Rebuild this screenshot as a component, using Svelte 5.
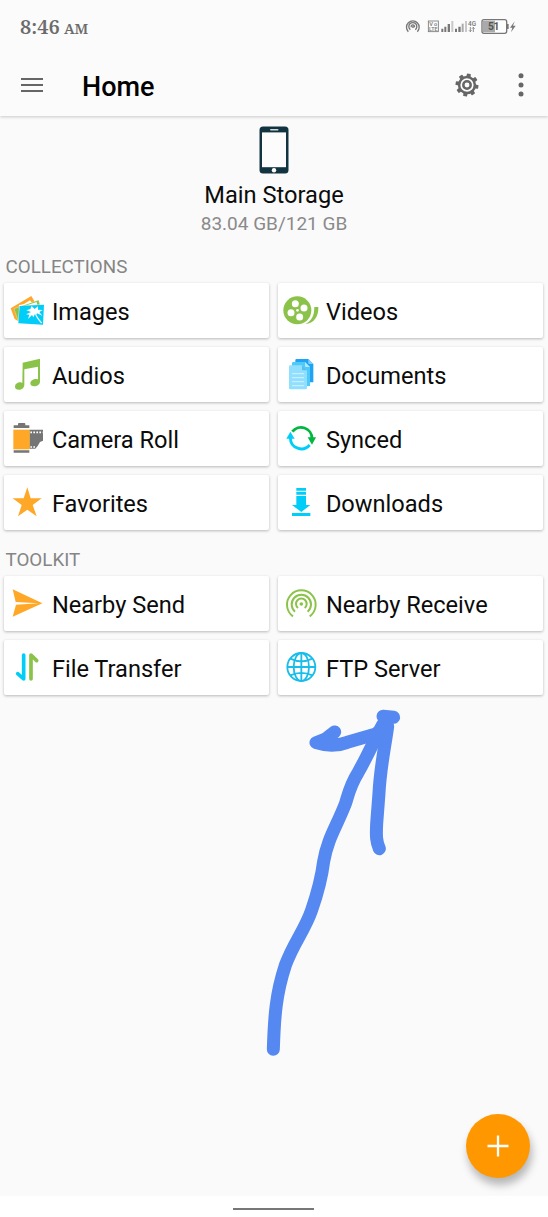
<script>
  const groups = [
    {
      title: 'Collections',
      items: [
        { label: 'Images', icon: 'images', box: '15 99 132 165' },
        { label: 'Videos', icon: 'videos', box: '27 39 132 165' },
        { label: 'Audios', icon: 'audios', box: '15 291 132 165' },
        { label: 'Documents', icon: 'documents', box: '27 231 132 165' },
        { label: 'Camera Roll', icon: 'camera', box: '15 33 132 165' },
        { label: 'Synced', icon: 'synced', box: '27 33 132 165' },
        { label: 'Favorites', icon: 'favorites', box: '15 225 132 165' },
        { label: 'Downloads', icon: 'downloads', box: '27 225 132 165' }
      ]
    },
    {
      title: 'Toolkit',
      items: [
        { label: 'Nearby Send', icon: 'send', box: '15 108 132 165' },
        { label: 'Nearby Receive', icon: 'receive', box: '57 48 132 165' },
        { label: 'File Transfer', icon: 'transfer', box: '15 300 132 165' },
        { label: 'FTP Server', icon: 'ftp', box: '57 240 132 165' }
      ]
    }
  ];
  const teeth = [0, 45, 90, 135, 180, 225, 270, 315];
</script>

<div class="screen">
  <header>
    <div class="status">
      <div class="time">8:46 <small>AM</small></div>
      <svg class="indicators" width="158" height="40" viewBox="0 0 474 120">
        <g fill="none" stroke="#777" stroke-width="4">
          <path d="M55 95A19 19 0 1 1 82 95M61 89A12 12 0 1 1 76 89" />
          <path d="M64 82A5 5 0 1 1 73 82" />
          <rect x="115" y="63" width="30" height="32" stroke-width="2.5" />
        </g>
        <circle cx="69" cy="81" r="3" fill="#777" />
        <g fill="#777" font-family="Roboto, sans-serif" font-weight="500">
          <text x="118" y="78" font-size="17" textLength="24">Vo</text>
          <text x="117" y="94" font-size="17" textLength="26" lengthAdjust="spacingAndGlyphs">LTE</text>
          <text x="234" y="79" font-size="20" textLength="24" lengthAdjust="spacingAndGlyphs">4G</text>
        </g>
        <path fill="none" stroke="#777" stroke-width="2.5" d="M241 81v14M237 91l4 4 4-4M250 96V82M246 86l4-4 4 4" />
        <path fill="#777" d="M154 86h6v10h-6zM163 80h6v16h-6zM173 72h7v24h-7zM195 86h6v10h-6zM205 80h7v16h-7z" />
        <path fill="#c8c8c8" d="M184 63h6v33h-6zM225 63h6v33h-6z" />
        <path fill="#aaa" d="M215 71h6v25h-6z" />
        <rect x="276" y="59" width="74" height="41" rx="6" fill="#fff" stroke="#777" stroke-width="4" />
        <path fill="#aaa" d="M279 62h36v35h-36z" />
        <path fill="#777" d="M351 72h5v15h-5zM374 64L360 83h7l-4 14 14-20h-8z" />
        <text x="294" y="91" font-family="Roboto, sans-serif" font-size="31" font-weight="700" fill="#555" textLength="34">51</text>
      </svg>
    </div>
    <div class="bar">
      <svg class="menu" width="22" height="16" viewBox="0 0 22 16">
        <path d="M0 1.9h22M0 8h22M0 14h22" stroke="#666" stroke-width="2" />
      </svg>
      <h1>Home</h1>
      <svg class="gear" width="24" height="24" viewBox="-12 -12 24 24">
        <g fill="#666">
          {#each teeth as angle}
            <rect x="-2" y="-11.500" width="4" height="4.500" rx=".8" transform="rotate({angle + 10})" />
          {/each}
        </g>
        <circle r="7.900" fill="none" stroke="#666" stroke-width="2.500" />
        <circle r="3.700" fill="none" stroke="#666" stroke-width="2.500" />
      </svg>
      <svg class="more" width="6" height="24" viewBox="0 0 6 24" fill="#666">
        <circle cx="3" cy="2.700" r="2.500" /><circle cx="3" cy="12" r="2.500" /><circle cx="3" cy="21" r="2.500" />
      </svg>
    </div>
  </header>

  <main>
    <section class="storage">
      <svg width="30" height="48" viewBox="0 0 30 48">
        <rect x=".5" y=".5" width="29" height="47" rx="3.500" fill="#123440" />
        <path fill="#fcfcfc" d="M3 6.400h24v34.800H3z" />
        <rect x="11" y="3" width="8.500" height="1.600" rx=".8" fill="#cfd8dc" />
        <circle cx="15" cy="44.200" r="2.200" fill="#fff" />
      </svg>
      <div class="name">Main Storage</div>
      <div class="size">83.04 GB/121 GB</div>
    </section>

    {#each groups as group}
      <h2>{group.title}</h2>
      <div class="grid">
        {#each group.items as item}
          <div class="tile">
            <svg width="44" height="55" viewBox={item.box}>
              {#if item.icon === 'images'}
                <path fill="#ffa726" d="M35 175L97 138L108 157L60 165L57 213L47 207z" />
                <path fill="#fff" d="M65 168L93 151L100 160L66 173z" />
                <path fill="#8bc34a" stroke="#fff" stroke-width="1" d="M45 176L119 150L123 164L61 169L58 215z" />
                <path fill="#fff" d="M78 167L113 156L115 164z" />
                <path fill="#00cdf8" d="M62 168L135 164L132 224L58 220z" />
                <path fill="#fff" d="M82 181L94 177L98 168L107 177L117 169L117 179L131 180L121 186L130 197L114 190L112 194C117 203 123 211 130 219L126 220C117 209 111 201 108 192L103 202L99 195L87 207L91 194L81 193L96 186z" />
              {:else if item.icon === 'videos'}
                <circle cx="85" cy="121" r="42" fill="#8bc34a" />
                <g fill="#fff">
                  <circle cx="79" cy="101" r="10.5" /><circle cx="105" cy="114" r="10.5" />
                  <circle cx="92" cy="141" r="10.5" /><circle cx="66" cy="128" r="10.5" /><circle cx="85.500" cy="121" r="4" />
                </g>
                <path fill="#8bc34a" d="M136 111H148C149 139 135 161 109 162C128 153 136 137 136 111z" />
              {:else if item.icon === 'audios'}
                <path fill="#8bc34a" d="M71 338L123 326V394C123 404 115 409 106 409C98 409 94 405 94 400C94 392 103 387 111 387Q115 387 117 388V350L76 358V404C76 413 68 419 60 419C52 419 48 415 48 410C48 402 56 397 64 397Q68 397 70 399z" />
              {:else if item.icon === 'documents'}
                <path fill="#1fa3f5" d="M82 267H118L133 282V337H82q-3 0-3-3V270q0-3 4-3z" />
                <path fill="#80cfff" d="M118 267L133 282H121q-3 0-3-3z" />
                <path fill="#4fc8fa" d="M73 276H108L123 291V348H73q-4 0-4-4V280q0-4 4-4z" />
                <path fill="#b3e9ff" d="M108 276L123 291H111q-3 0-3-3z" />
                <path fill="#90dfff" d="M64 286H99L114 301V354q0 4-4 4H64q-4 0-4-4V290q0-4 4-4z" />
                <path fill="#52bef2" d="M99 286L114 301H102q-3 0-3-3z" />
                <path stroke="#d0f3ff" stroke-width="3" d="M69 311h36M69 323h36M69 335h36M69 347h36" />
              {:else if item.icon === 'camera'}
                <path fill="#757575" d="M57 72q0-3 3-3h16q3 0 3 3v4h12v8H44v-8h13zM44 151h47v7H44zM91 89h41v33l-9 4-7 12-7 8H91z" />
                <path fill="#ffa726" d="M43 89h49v59H43z" />
                <path stroke="#fff" stroke-width="5" stroke-dasharray="5 4" d="M94 97h37M94 141h17" />
              {:else if item.icon === 'synced'}
                <g fill="none" stroke-width="8.500">
                  <path stroke="#00b83f" d="M70 95A33 33 0 0 1 129 115" />
                  <path stroke="#00cdf8" d="M122 135A33 33 0 0 1 64 114" />
                </g>
                <path fill="#00b83f" d="M116 112h25l-12 22z" />
                <path fill="#00cdf8" d="M52 116L64 95L77 116z" />
              {:else if item.icon === 'favorites'}
                <path fill="#ffa726" d="M85 262L95 295H128L101 315L113 349L85 329L57 349L68 315L41 295H74z" />
              {:else if item.icon === 'downloads'}
                <path fill="#00cdf8" d="M82 264h29v8H82zM82 275h29v9H82zM82 288h29v27h13L97 336L69 315h13zM69 339h55v9H69z" />
              {:else if item.icon === 'send'}
                <path fill="#ffa726" d="M41 148L130 190L41 230L51 194L119 190L50 186z" />
              {:else if item.icon === 'receive'}
                <g fill="none" stroke="#8bc34a" stroke-width="6">
                  <path d="M102 169A43 43 0 1 1 152 169" />
                  <path d="M108 155A29 29 0 1 1 146 155" />
                  <path d="M117 144A16 16 0 1 1 137 144" />
                </g>
                <circle cx="127" cy="132" r="5.500" fill="#8bc34a" />
              {:else if item.icon === 'transfer'}
                <g fill="none" stroke-width="11" stroke-linejoin="round" stroke-linecap="round">
                  <path stroke="#00cdf8" d="M74 345V417L56 401" />
                  <path stroke="#8bc34a" d="M96 417V345L113 362" />
                </g>
              {:else}
                <g fill="none" stroke="#18bdea" stroke-width="5.500">
                  <circle cx="127" cy="321" r="42" />
                  <ellipse cx="127" cy="321" rx="23" ry="42" />
                  <path d="M127 279V363M85 321H169M94 296Q127 312 160 296M94 346Q127 331 160 346" />
                </g>
              {/if}
            </svg>
            <span>{item.label}</span>
          </div>
        {/each}
      </div>
    {/each}
  </main>

  <svg class="drawing" width="150" height="370" viewBox="0 0 450 1110" fill="none" stroke="#5588f0" stroke-width="39" stroke-linecap="round" stroke-linejoin="round">
    <path d="M40 1048C43 950 48 880 76 796C101 727 135 690 155 630C174 575 184 540 191 484C204 412 229 382 257 309C265 282 271 254 294 218C324 165 341 123 367 76L381 60" />
    <path d="M224 96L198 116L168 128C202 139 234 138 262 127L345 103L383 79C375 140 361 200 357 279L350 371C348 410 349 425 358 446" />
    <path d="M369 49L401 52" />
  </svg>

  <button class="fab" aria-label="Add">
    <svg width="22" height="22" viewBox="0 0 22 22"><path d="M11 .5v21M.5 11h21" stroke="#fff" stroke-width="2.300" /></svg>
  </button>
  <footer><i></i></footer>
</div>

<style>
  :global(body) { margin: 0; background: #fafafa; }
  .screen {
    position: relative;
    box-sizing: border-box;
    width: 548px;
    height: 1217px;
    display: flex;
    flex-direction: column;
    background: #fafafa;
    color: #0b0b0b;
    font-family: Roboto, sans-serif;
    overflow: hidden;
  }
  svg { display: block; flex: none; }
  header { height: 116px; background: #fbfbfb; box-shadow: 0 1px 3px rgba(0, 0, 0, .2); }
  .status { height: 54px; display: flex; justify-content: space-between; }
  .time { padding: 14px 0 0 20px; font: 600 20px/26px "Noto Serif", "Liberation Serif", serif; color: #6b6b6b; white-space: nowrap; }
  .time small { font-size: 14.500px; margin-left: -1px; }
  .bar { height: 62px; display: flex; align-items: center; padding: 0 24.500px 0 21px; box-sizing: border-box; }
  h1 { margin: 3px auto 0 39px; font-size: 27px; font-weight: 500; line-height: 32px; color: #000; }
  .gear { margin-right: 39px; }
  .storage { display: flex; flex-direction: column; align-items: center; padding-top: 10px; height: 129px; box-sizing: border-box; }
  .name { margin-top: 7px; font-size: 23.650px; line-height: 28px; }
  .size { margin-top: 4px; font-size: 19px; line-height: 22px; color: #8a8a8a; }
  h2 { margin: 0; padding: 11px 0 4px 5.500px; font-size: 18.800px; line-height: 23px; font-weight: 400; color: #858585; text-transform: uppercase; }
  .grid { display: grid; grid-template-columns: 265px 265px; grid-auto-rows: 55px; gap: 9px; padding: 0 4.400px; }
  .grid + h2 { padding-top: 19px; }
  .tile { display: flex; align-items: center; background: #fff; border-radius: 2px; box-shadow: 0 1px 3px rgba(0, 0, 0, .27); }
  .tile span { margin: 2px 0 0 3.500px; font-size: 23.600px; line-height: 28px; white-space: nowrap; }
  .drawing { position: absolute; left: 260px; top: 700px; }
  .fab {
    position: absolute;
    right: 18px;
    bottom: 39px;
    width: 64px;
    height: 64px;
    padding: 0;
    border: 0;
    border-radius: 50%;
    display: grid;
    place-items: center;
    background: #ff9800;
    box-shadow: 2px 7px 9px rgba(0, 0, 0, .28);
  }
  footer { margin-top: auto; height: 21px; background: #fff; display: flex; justify-content: center; }
  footer i { width: 81px; height: 2px; margin: 12px 1px 0 0; background: #777; }
</style>
